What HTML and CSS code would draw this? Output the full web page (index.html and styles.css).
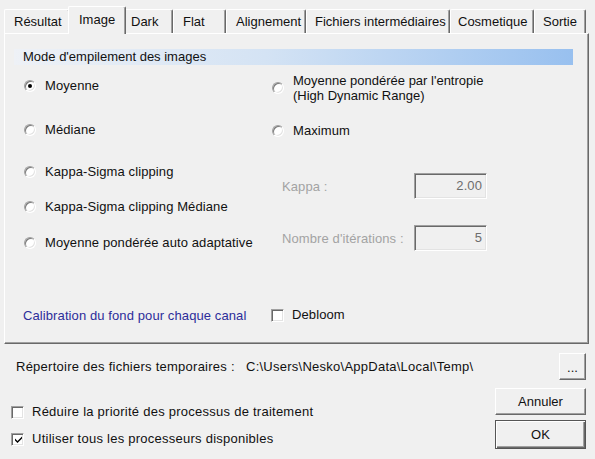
FILE: index.html
```html
<!DOCTYPE html>
<html lang="fr">
<head>
<meta charset="utf-8">
<title>Empilement</title>
<link rel="stylesheet" href="styles.css">
</head>
<body>
<div class="tabs">
  <div class="tab t-res">Résultat</div>
  <div class="tab tab-active t-img">Image</div>
  <div class="tab t-dark">Dark</div>
  <div class="tab t-flat">Flat</div>
  <div class="tab t-align">Alignement</div>
  <div class="tab t-fich">Fichiers intermédiaires</div>
  <div class="tab t-cosm">Cosmetique</div>
  <div class="tab t-sortie">Sortie</div>
</div>
<div class="panel">
  <div class="group-title">Mode d'empilement des images</div>
  <div class="options">
    <div class="col-left">
      <div class="opt"><span class="radio checked"></span><span>Moyenne</span></div>
      <div class="opt"><span class="radio"></span><span>Médiane</span></div>
      <div class="opt"><span class="radio"></span><span>Kappa-Sigma clipping</span></div>
      <div class="opt"><span class="radio"></span><span>Kappa-Sigma clipping Médiane</span></div>
      <div class="opt"><span class="radio"></span><span>Moyenne pondérée auto adaptative</span></div>
    </div>
    <div class="col-right">
      <div class="opt opt-two"><span class="radio"></span><span class="two-line">Moyenne pondérée par l'entropie<br>(High Dynamic Range)</span></div>
      <div class="opt"><span class="radio"></span><span>Maximum</span></div>
      <div class="param"><span class="param-label">Kappa :</span><span class="field">2.00</span></div>
      <div class="param"><span class="param-label">Nombre d'itérations :</span><span class="field">5</span></div>
    </div>
  </div>
  <div class="calib-row">
    <span class="calib">Calibration du fond pour chaque canal</span>
    <span class="check-item"><span class="checkbox"></span><span>Debloom</span></span>
  </div>
</div>
<div class="footer">
  <div class="dir-row">
    <span class="dir-label">Répertoire des fichiers temporaires :</span>
    <span class="dir-path">C:\Users\Nesko\AppData\Local\Temp\</span>
    <button class="btn btn-browse">...</button>
  </div>
  <div class="bottom-row">
    <div class="checks">
      <div class="check-item"><span class="checkbox"></span><span>Réduire la priorité des processus de traitement</span></div>
      <div class="check-item"><span class="checkbox checked"><svg width="9" height="9" viewBox="0 0 9 9"><path d="M1 3.5 L3.5 6 L8 1.5 L8 3.5 L3.5 8 L1 5.5 Z" fill="#000"/></svg></span><span>Utiliser tous les processeurs disponibles</span></div>
    </div>
    <div class="buttons">
      <button class="btn btn-main">Annuler</button>
      <button class="btn btn-main btn-default">OK</button>
    </div>
  </div>
</div>
</body>
</html>
```
FILE: styles.css
```css
html, body {
  margin: 0;
  padding: 0;
  background: #f0f0f0;
}
body {
  width: 595px;
  height: 459px;
  overflow: hidden;
  font-family: "Liberation Sans", Arial, sans-serif;
  font-size: 13px;
  color: #111;
}

/* Tabs */
.tabs {
  display: flex;
  align-items: flex-end;
  height: 33px;
  padding-left: 4px;
  box-sizing: border-box;
}
.tab {
  height: 24px;
  box-sizing: border-box;
  padding: 4px 0 0 9px;
  line-height: 16px;
  white-space: nowrap;
  border-top: 1px solid #fff;
  border-left: 1px solid #fff;
  border-right: 1px solid #696969;
  box-shadow: inset -1px 0 0 #a0a0a0;
  border-radius: 2px 2px 0 0;
  background: #f0f0f0;
}
.t-res { width: 66px; }
.t-img { width: 58px; }
.t-dark { width: 49px; padding-left: 6px; }
.t-flat { width: 53px; }
.t-align { width: 80px; }
.t-fich { width: 144px; padding-left: 8px; }
.t-cosm { width: 84px; padding-left: 7px; }
.t-sortie { width: 52px; padding-left: 8px; }
.tab-active {
  height: 28px;
  margin: 0 -2px -1px -2px;
  padding: 5px 0 0 10px;
  position: relative;
  z-index: 2;
}

/* Panel */
.panel {
  margin-left: 4px;
  width: 585px;
  height: 311px;
  box-sizing: border-box;
  border: 1px solid;
  border-color: #fff #696969 #696969 #fff;
  box-shadow: inset -1px -1px 0 #a0a0a0;
  padding-top: 15px;
  letter-spacing: 0.1px;
}
.group-title {
  margin-left: 9px;
  width: 559px;
  height: 16px;
  line-height: 16px;
  padding-left: 9px;
  box-sizing: border-box;
  background: linear-gradient(to right, #eef1f6 0%, #d4e3f4 45%, #98c0ef 100%);
  color: #111;
  letter-spacing: 0;
}

.options {
  display: flex;
  align-items: flex-start;
  margin-top: 7px;
  padding-left: 19px;
}
.col-left {
  width: 248px;
  margin-top: 6px;
  display: grid;
  grid-template-rows: 44px 42px 35px 36px 16px;
  align-items: start;
}
.col-right {
  display: grid;
  grid-template-rows: 51px 50px 52px 26px;
  align-items: start;
}
.opt {
  display: flex;
  align-items: center;
  gap: 9px;
  height: 16px;
  line-height: 16px;
  white-space: nowrap;
}
.opt-two {
  height: 32px;
}
.two-line {
  line-height: 15px;
  letter-spacing: 0;
}
.radio {
  width: 12px;
  height: 12px;
  box-sizing: border-box;
  border-radius: 50%;
  background: #fff;
  border: 1px solid;
  border-color: #a0a0a0 #fff #fff #a0a0a0;
  box-shadow: inset 1px 1px 0 #7a7a7a, inset -1px -1px 0 #e3e3e3;
  display: flex;
  align-items: center;
  justify-content: center;
  flex: none;
}
.radio.checked::after {
  content: "";
  width: 4px;
  height: 4px;
  border-radius: 50%;
  background: #000;
}

.param {
  display: flex;
  align-items: center;
  height: 26px;
  padding-left: 10px;
}
.param-label {
  width: 132px;
  color: #a3a3a3;
  white-space: nowrap;
}
.field {
  width: 73px;
  height: 26px;
  box-sizing: border-box;
  border: 1px solid;
  border-color: #a0a0a0 #fff #fff #a0a0a0;
  box-shadow: inset 1px 1px 0 #696969, inset -1px -1px 0 #e3e3e3;
  background: #f0f0f0;
  color: #6d6d6d;
  text-align: right;
  padding: 4px 4px 0 0;
  line-height: 16px;
}

.calib-row {
  display: flex;
  align-items: center;
  margin-top: 56px;
  padding-left: 18px;
  height: 16px;
}
.calib {
  width: 248px;
  color: #2d2d9a;
  white-space: nowrap;
}
.check-item {
  display: flex;
  align-items: center;
  gap: 8px;
  white-space: nowrap;
  line-height: 16px;
}
.checkbox {
  width: 13px;
  height: 13px;
  box-sizing: border-box;
  background: #fff;
  border: 1px solid;
  border-color: #a0a0a0 #fff #fff #a0a0a0;
  box-shadow: inset 1px 1px 0 #696969, inset -1px -1px 0 #e3e3e3;
  display: flex;
  align-items: center;
  justify-content: center;
  flex: none;
}
.checkbox svg {
  display: block;
  margin: 1px 0 0 1px;
}

/* Footer */
.footer {
  padding: 0 9px 0 0;
  letter-spacing: 0.25px;
}
.dir-row {
  display: flex;
  align-items: center;
  margin-top: 9px;
  padding-left: 16px;
  height: 27px;
}
.dir-label {
  width: 230px;
  white-space: nowrap;
}
.dir-path {
  white-space: nowrap;
}
.btn {
  font-family: "Liberation Sans", Arial, sans-serif;
  font-size: 13px;
  color: #111;
  background: #f0f0f0;
  border: 1px solid;
  border-color: #fff #696969 #696969 #fff;
  box-shadow: inset -1px -1px 0 #a0a0a0;
  padding: 0;
  margin: 0;
  box-sizing: border-box;
  letter-spacing: 0;
}
.btn-browse {
  margin-left: auto;
  width: 27px;
  height: 27px;
  line-height: 16px;
  padding-top: 2px;
}
.bottom-row {
  display: flex;
  justify-content: space-between;
  margin-top: 8px;
}
.checks {
  display: flex;
  flex-direction: column;
  gap: 11px;
  padding: 16px 0 0 11px;
}
.buttons {
  display: flex;
  flex-direction: column;
  gap: 5px;
}
.btn-main {
  width: 91px;
  height: 27px;
}
.btn-default {
  height: 29px;
  border: 1px solid #555;
  box-shadow: inset 1px 1px 0 #fff, inset -1px -1px 0 #696969, inset -2px -2px 0 #a0a0a0;
}
```
